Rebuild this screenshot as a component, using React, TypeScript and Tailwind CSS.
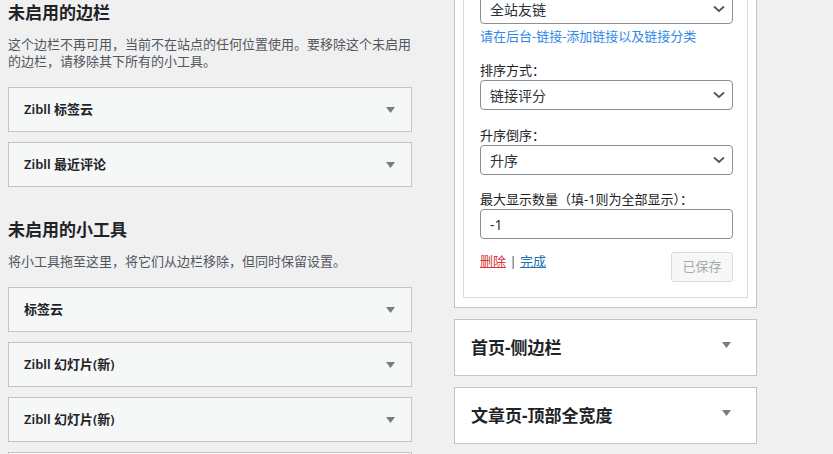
import React from 'react';

const font = "font-['Noto_Sans','Noto_Sans_CJK_SC',sans-serif]";

function Triangle() {
  return (
    <svg width="9" height="6" viewBox="0 0 9 6" className="shrink-0">
      <polygon points="0,0 9,0 4.5,6" fill="#787c82" />
    </svg>
  );
}

function Chevron() {
  return (
    <svg width="12" height="8" viewBox="0 0 12 8" className="shrink-0">
      <polyline points="1,1.5 6,6 11,1.5" fill="none" stroke="#50575e" strokeWidth="1.8" />
    </svg>
  );
}

function WidgetBox({ title }: { title: string }) {
  return (
    <div className="flex h-[45px] items-center justify-between border border-[#c3c4c7] bg-[#f6f7f7] pl-[15px] pr-[16px]">
      <span className="text-[13px] font-semibold text-[#1d2327]">{title}</span>
      <Triangle />
    </div>
  );
}

function Section({ title, desc, widgets, first }: { title: string; desc: string; widgets: string[]; first?: boolean }) {
  return (
    <div className={first ? '' : 'mt-[31px]'}>
      <h2 className="text-[17px] font-bold leading-[24px] text-[#1d2327]">{title}</h2>
      <p className="mt-[11px] text-[13px] leading-[17px] text-[#50575e]">{desc}</p>
      <div className="mt-[17px] flex flex-col gap-[10px]">
        {widgets.map((w, i) => (
          <WidgetBox key={i} title={w} />
        ))}
      </div>
    </div>
  );
}

function FakeSelect({ value }: { value: string }) {
  return (
    <div className="flex h-[30px] items-center justify-between rounded-[4px] border border-[#8c8f94] bg-white pl-[9px] pr-[7px] text-[14px] text-[#2c3338]">
      <span>{value}</span>
      <Chevron />
    </div>
  );
}

function Field({ label, children, className }: { label: string; children: React.ReactNode; className?: string }) {
  return (
    <div className={className}>
      <div className="mb-[1px] text-[13px] leading-[18px] text-[#1d2327]">{label}</div>
      {children}
    </div>
  );
}

function SidebarBox({ title }: { title: string }) {
  return (
    <div className="mt-[11px] flex h-[57px] items-center justify-between border border-[#c3c4c7] bg-white pl-[16px] pr-[25px]">
      <span className="text-[17px] font-bold text-[#1d2327]">{title}</span>
      <div className="-mt-[5px]">
        <Triangle />
      </div>
    </div>
  );
}

export default function App() {
  return (
    <div className={`flex h-[454px] w-[833px] overflow-hidden bg-[#f0f0f1] pl-2 pt-[1px] ${font}`}>
      <div className="w-[404px] shrink-0">
        <Section
          first
          title="未启用的边栏"
          desc="这个边栏不再可用，当前不在站点的任何位置使用。要移除这个未启用的边栏，请移除其下所有的小工具。"
          widgets={['Zibll 标签云', 'Zibll 最近评论']}
        />
        <Section
          title="未启用的小工具"
          desc="将小工具拖至这里，将它们从边栏移除，但同时保留设置。"
          widgets={['标签云', 'Zibll 幻灯片(新)', 'Zibll 幻灯片(新)', 'Zibll 链接列表']}
        />
      </div>

      <div className="ml-[42px] w-[303px] shrink-0">
        <div className="-mt-[61px] border border-[#c3c4c7] bg-white px-2 pb-[9px] pt-2">
          <div className="border border-[#dcdcde] bg-white pb-[15px] pl-4 pr-[14px] pt-[25px]">
            <Field label="链接分类：">
              <FakeSelect value="全站友链" />
            </Field>
            <div className="mt-[3px] text-[13px] leading-[18px] text-[#3088e8]">请在后台-链接-添加链接以及链接分类</div>
            <Field label="排序方式：" className="mt-[16px]">
              <FakeSelect value="链接评分" />
            </Field>
            <Field label="升序倒序：" className="mt-[16px]">
              <FakeSelect value="升序" />
            </Field>
            <Field label="最大显示数量（填-1则为全部显示）：" className="mt-[15px]">
              <div className="flex h-[30px] items-center rounded-[4px] border border-[#8c8f94] bg-white pl-[9px] text-[14px] text-[#2c3338]">
                -1
              </div>
            </Field>
            <div className="mt-[13px] flex items-start justify-between">
              <div className="text-[13px] leading-[18px]">
                <span className="text-[#d63638] underline">删除</span>
                <span className="text-[#50575e]"> | </span>
                <span className="text-[#2271b1] underline">完成</span>
              </div>
              <div className="flex h-[30px] w-[62px] items-center justify-center rounded-[3px] border border-[#dcdcde] bg-[#f6f7f7] text-[13px] text-[#a7aaad]">
                已保存
              </div>
            </div>
          </div>
        </div>
        <SidebarBox title="首页-侧边栏" />
        <SidebarBox title="文章页-顶部全宽度" />
      </div>
    </div>
  );
}
